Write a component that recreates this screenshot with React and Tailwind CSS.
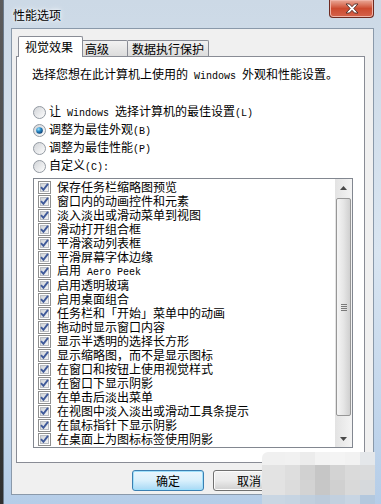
import React from 'react';

const effects = [
  '保存任务栏缩略图预览',
  '窗口内的动画控件和元素',
  '淡入淡出或滑动菜单到视图',
  '滑动打开组合框',
  '平滑滚动列表框',
  '平滑屏幕字体边缘',
  '启用 Aero Peek',
  '启用透明玻璃',
  '启用桌面组合',
  '任务栏和「开始」菜单中的动画',
  '拖动时显示窗口内容',
  '显示半透明的选择长方形',
  '显示缩略图，而不是显示图标',
  '在窗口和按钮上使用视觉样式',
  '在窗口下显示阴影',
  '在单击后淡出菜单',
  '在视图中淡入淡出或滑动工具条提示',
  '在鼠标指针下显示阴影',
  '在桌面上为图标标签使用阴影',
];

const options = [
  { label: '让 Windows 选择计算机的最佳设置(L)', on: false },
  { label: '调整为最佳外观(B)', on: true },
  { label: '调整为最佳性能(P)', on: false },
  { label: '自定义(C):', on: false },
];

// pixelated watermark in the bottom right corner
const mosaic = [
  ['bg-[#f0f0f0]', 'bg-[#f1f1f1]', 'bg-[#ececec]', 'bg-[#f3f3f3]', 'bg-[#f4f4f4]', 'bg-[#f2f2f2]', 'bg-[#e4e7ea]'],
  ['bg-[#e3e3e3]', 'bg-[#dedede]', 'bg-[#d1d1d1]', 'bg-[#c6c6c6]', 'bg-[#d3d3d3]', 'bg-[#dadada]', 'bg-[#dadbdc]'],
  ['bg-[#e2e2e2]', 'bg-[#dcdcdc]', 'bg-[#d3d3d3]', 'bg-[#c7c7c7]', 'bg-[#d0d0d0]', 'bg-[#d9d9d9]', 'bg-[#d6d9dc]'],
  ['bg-[#c9d6e3]', 'bg-[#c6d4e2]', 'bg-[#c0cfde]', 'bg-[#bccbdb]', 'bg-[#c2d0df]', 'bg-[#c8d5e3]', 'bg-[#b3c8de]'],
];

const Label = ({ text }) =>
  text.split(/([\x20-\x7e]+)/).map((part, i) =>
    /[\x20-\x7e]/.test(part) ? (
      <span key={i} className="font-['Liberation_Mono',monospace] text-[10px] whitespace-pre">
        {part}
      </span>
    ) : (
      part
    )
  );

const Radio = ({ on }) => (
  <svg width="13" height="13" viewBox="0 0 13 13">
    <defs>
      <linearGradient id="radioBg" x1="0" y1="0" x2="1" y2="1">
        <stop offset="0" stopColor="#cfd2d6" />
        <stop offset="1" stopColor="#ffffff" />
      </linearGradient>
      <radialGradient id="radioDot" cx="0.35" cy="0.3" r="0.75">
        <stop offset="0" stopColor="#9ce6ff" />
        <stop offset="0.45" stopColor="#2b8cc8" />
        <stop offset="1" stopColor="#0b3b70" />
      </radialGradient>
    </defs>
    <circle cx="6.5" cy="6.5" r="6" fill="url(#radioBg)" stroke="#939aa2" />
    {on && <circle cx="6.5" cy="6.5" r="3.3" fill="url(#radioDot)" />}
  </svg>
);

const Check = () => (
  <svg width="13" height="13" viewBox="0 0 13 13">
    <defs>
      <linearGradient id="checkBg" x1="0" y1="0" x2="1" y2="1">
        <stop offset="0" stopColor="#cdd1d6" />
        <stop offset="1" stopColor="#f7f7f7" />
      </linearGradient>
    </defs>
    <rect x="0.5" y="0.5" width="12" height="12" fill="#fff" stroke="#8e8f8f" />
    <rect x="2.5" y="2.5" width="8" height="8" fill="url(#checkBg)" stroke="#b8bcc2" />
    <path d="M3 6.2 L5.4 8.8 L10 2.8" fill="none" stroke="#3f5a9a" strokeWidth="1.9" />
  </svg>
);

const Arrow = ({ down }) => (
  <svg width="7" height="4" viewBox="0 0 7 4">
    <polygon points={down ? '0,0 7,0 3.5,4' : '0,4 7,4 3.5,0'} fill="#4a4a4a" />
  </svg>
);

const Button = ({ children, primary }) => (
  <div
    className={
      primary
        ? 'w-[72px] h-[21px] rounded-[3px] border border-[#3c7fb1] shadow-[inset_0_0_0_1px_#9fe0fb] bg-gradient-to-b from-[#eaf6fd] via-[#d9f0fc] to-[#a7d9f5] flex items-center justify-center'
        : 'w-[72px] h-[21px] rounded-[3px] border border-[#707070] shadow-[inset_0_0_0_1px_#fcfcfc] bg-gradient-to-b from-[#f2f2f2] via-[#ebebeb] to-[#cfcfcf] flex items-center justify-center'
    }
  >
    {children}
  </div>
);

export default function App() {
  return (
    <div className="w-[381px] h-[504px] relative overflow-hidden flex bg-[#333] font-['Noto_Sans_CJK_SC',sans-serif] text-[12px] text-black">
      <div className="w-[3px] bg-gradient-to-b from-[#5c5c5c] to-[#2f2f2f]" />
      <div className="flex-1 flex flex-col border-l border-[#6b7b8c] bg-gradient-to-b from-[#ccd9e6] via-[#d9e5f1] to-[#b5cde8] pl-[7px] pr-[7px] pb-[9px]">
        {/* title bar */}
        <div className="h-[28px] flex justify-between items-start">
          <div className="ml-[2px] mt-[7px] leading-[16px] [text-shadow:0_0_6px_#fff,0_0_3px_#fff]">性能选项</div>
          <div className="w-[45px] h-[18px] rounded-b-[4px] border border-t-0 border-[#6e2a20] bg-gradient-to-b from-[#e9a998] via-[#cc4a2f] to-[#d5624a] shadow-[inset_0_0_0_1px_#f0b3a6] flex items-center justify-center">
            <svg width="14" height="11" viewBox="0 0 14 11">
              <path
                d="M1 1 H4.5 L7 3.7 L9.5 1 H13 L8.8 5.5 L13 10 H9.5 L7 7.3 L4.5 10 H1 L5.2 5.5 Z"
                fill="#fff"
                stroke="#4a2a26"
                strokeWidth="0.9"
                strokeLinejoin="round"
              />
            </svg>
          </div>
        </div>

        {/* client area */}
        <div className="flex-1 flex flex-col border border-[#8a99aa] bg-[#f0f0f0] pl-[4px] pr-[8px] pt-[7px]">
          <div className="h-[20px] flex items-end relative z-10">
            <div className="ml-[2px] w-[65px] h-[21px] -mb-px bg-white border border-b-0 border-[#898c95] rounded-t-[2px] pl-[6px] pt-[2px] leading-[16px]">
              视觉效果
            </div>
            <div className="w-[45px] h-[16px] bg-gradient-to-b from-[#f2f2f2] to-[#dcdcdc] border border-b-0 border-l-0 border-[#898c95] rounded-tr-[2px] pl-[2px] leading-[16px]">
              高级
            </div>
            <div className="w-[81px] h-[16px] bg-gradient-to-b from-[#f2f2f2] to-[#dcdcdc] border border-b-0 border-l-0 border-[#898c95] rounded-tr-[2px] pl-[4px] leading-[16px]">
              数据执行保护
            </div>
          </div>

          <div className="h-[407px] flex flex-col bg-white border border-[#898c95] pl-[15px] pr-[11px]">
            <div className="mt-[9px] h-[16px] leading-[16px]">
              <Label text="选择您想在此计算机上使用的 Windows 外观和性能设置。" />
            </div>

            <div className="mt-[21px] flex flex-col">
              {options.map((o) => (
                <div key={o.label} className="h-[18px] flex items-center gap-[3px] ml-[1px]">
                  <Radio on={o.on} />
                  <span className="leading-[16px]">
                    <Label text={o.label} />
                  </span>
                </div>
              ))}
            </div>

            <div className="mt-[3px] ml-[1px] h-[270px] flex border border-[#828790]">
              <div className="flex-1 pt-[1px] pl-[4px]">
                {effects.map((e) => (
                  <div key={e} className="h-[14px] flex items-center gap-[6px] whitespace-nowrap">
                    <Check />
                    <span className="leading-[14px]">
                      <Label text={e} />
                    </span>
                  </div>
                ))}
              </div>
              <div className="w-[17px] flex flex-col bg-gradient-to-r from-[#e3e3e3] to-[#f4f4f4]">
                <div className="h-[17px] flex items-center justify-center">
                  <Arrow />
                </div>
                <div className="flex-1 pt-[2px]">
                  <div className="h-[218px] mx-px rounded-[2px] border border-[#979797] bg-gradient-to-r from-[#f5f5f5] via-[#e6e6e6] to-[#d0d0d0] flex items-center justify-center">
                    <div className="flex flex-col gap-[1px]">
                      <div className="w-[6px] h-px bg-[#7a7a7a]" />
                      <div className="w-[6px] h-px bg-[#7a7a7a]" />
                      <div className="w-[6px] h-px bg-[#7a7a7a]" />
                      <div className="w-[6px] h-px bg-[#7a7a7a]" />
                    </div>
                  </div>
                </div>
                <div className="h-[17px] flex items-center justify-center">
                  <Arrow down />
                </div>
              </div>
            </div>
          </div>

          <div className="mt-[7px] -mr-px flex justify-end gap-[9px]">
            <Button primary>确定</Button>
            <Button>取消</Button>
            <Button>应用(A)</Button>
          </div>
        </div>
      </div>

      <div className="absolute left-[262px] top-[452px] grid grid-cols-[23px_15px_15px_15px_15px_15px_15px] grid-rows-[13px_15px_15px_9px] rounded-tl-[6px] overflow-hidden">
        {mosaic.flat().map((c, i) => (
          <div key={i} className={c} />
        ))}
      </div>
    </div>
  );
}
